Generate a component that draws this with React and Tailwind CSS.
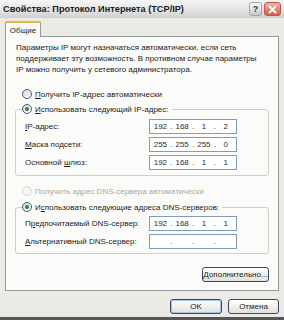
import React from "react";

function Radio({ checked = false, disabled = false }) {
  return (
    <span
      className={
        disabled
          ? "flex h-[10px] w-[10px] shrink-0 items-center justify-center rounded-full border border-[#d8d6cc] bg-[#f6f5f1]"
          : "flex h-[10px] w-[10px] shrink-0 items-center justify-center rounded-full border border-[#3d5f84] bg-gradient-to-br from-[#d8d8d2] to-white"
      }
    >
      {checked && <span className="h-[4px] w-[4px] rounded-full bg-[#3d7a3d]" />}
    </span>
  );
}

function IpField({ parts }) {
  return (
    <div className="flex h-[15px] w-[88px] shrink-0 items-center border border-[#7f9db9] bg-white px-[1px] text-[#2a2a2a]">
      {parts.map((p, i) => (
        <React.Fragment key={i}>
          {i > 0 && <span className="w-[3px] text-center">.</span>}
          <span className="flex-1 text-center">{p}</span>
        </React.Fragment>
      ))}
    </div>
  );
}

function Row({ children, parts }) {
  return (
    <div className="flex items-center">
      <span className="w-[124px] shrink-0">{children}</span>
      <IpField parts={parts} />
    </div>
  );
}

export default function App() {
  return (
    <div className="flex h-[320px] w-[284px] flex-col overflow-hidden bg-[#ebeae4] font-['Liberation_Sans',Arial,sans-serif] text-[8px] leading-[11px] text-[#1c1c1c]">
      {/* Title bar */}
      <div className="flex h-[18px] shrink-0 items-center bg-gradient-to-b from-[#f6f6f6] via-[#e6e6e6] to-[#d0d0d0] pl-[3px] pr-[3px]">
        <span className="flex-1 whitespace-nowrap text-[9.2px] font-bold text-[#202020]">
          Свойства: Протокол Интернета (TCP/IP)
        </span>
        <span className="flex h-[14px] w-[13px] items-center justify-center rounded-[3px] border border-[#a0a4aa] bg-gradient-to-b from-white to-[#c4c8ce] text-[9px] font-bold leading-none text-[#3a3a3a]">
          ?
        </span>
        <span className="ml-[2px] flex h-[14px] w-[17px] items-center justify-center rounded-[3px] border border-[#b8584a] bg-gradient-to-b from-[#f2b2a4] to-[#d65f48]">
          <svg width="9" height="9" viewBox="0 0 9 9">
            <path d="M1.5 1.5 L7.5 7.5 M7.5 1.5 L1.5 7.5" stroke="white" strokeWidth="1.8" strokeLinecap="round" />
          </svg>
        </span>
      </div>

      {/* Body */}
      <div className="flex flex-1 flex-col px-[5px] pt-[3px]">
        <div className="flex">
          <div className="relative z-10 -mb-px flex h-[16px] w-[36px] items-center justify-center rounded-t-[2px] border-x border-t-2 border-[#919b9c] border-t-[#f0b040] bg-[#fbfbf9] text-[#1c1c1c]">
            Общие
          </div>
        </div>

        <div className="flex h-[255px] flex-col border border-[#919b9c] bg-[#fbfbf9] px-[9px] pt-[5px]">
          <p className="pl-[1px] whitespace-nowrap">
            Параметры IP могут назначаться автоматически, если сеть
            <br />
            поддерживает эту возможность. В противном случае параметры
            <br />
            IP можно получить у сетевого администратора.
          </p>

          <div className="ml-[7px] mt-[13px] flex h-[12px] items-center gap-[3px]">
            <Radio />
            <span>
              <u className="underline">П</u>олучить IP-адрес автоматически
            </span>
          </div>

          <fieldset className="mt-[3px] rounded-[3px] border border-[#d0d0bf] pb-[5px]">
            <legend className="ml-[6px] pr-[3px]">
              <span className="flex h-[12px] items-center gap-[3px]">
                <Radio checked />
                <span>
                  <u className="underline">И</u>спользовать следующий IP-адрес:
                </span>
              </span>
            </legend>
            <div className="mt-[4px] flex flex-col gap-[3px] pl-[9px]">
              <Row parts={["192", "168", "1", "2"]}>
                <u className="underline">I</u>P-адрес:
              </Row>
              <Row parts={["255", "255", "255", "0"]}>
                <u className="underline">М</u>аска подсети:
              </Row>
              <Row parts={["192", "168", "1", "1"]}>
                Основной <u className="underline">ш</u>люз:
              </Row>
            </div>
          </fieldset>

          <div className="ml-[7px] mt-[9px] flex h-[12px] items-center gap-[3px] text-[#aca899]">
            <Radio disabled />
            <span>
              Получить адрес DNS-сервера автоматически
            </span>
          </div>

          <fieldset className="mt-[4px] rounded-[3px] border border-[#d0d0bf] pb-[4px]">
            <legend className="ml-[6px] pr-[3px]">
              <span className="flex h-[12px] items-center gap-[3px]">
                <Radio checked />
                <span>
                  И<u className="underline">с</u>пользовать следующие адреса DNS-серверов:
                </span>
              </span>
            </legend>
            <div className="mt-[3px] flex flex-col gap-[3px] pl-[9px]">
              <Row parts={["192", "168", "1", "1"]}>
                П<u className="underline">р</u>едпочитаемый DNS-сервер:
              </Row>
              <Row parts={["", "", "", ""]}>
                <u className="underline">А</u>льтернативный DNS-сервер:
              </Row>
            </div>
          </fieldset>

          <div className="mt-[13px] flex justify-end">
            <div className="flex h-[15px] w-[67px] items-center justify-center rounded-[3px] border border-[#2c4a6e] bg-gradient-to-b from-white to-[#e2e2da]">
              <span>
                <u className="underline">Д</u>ополнительно...
              </span>
            </div>
          </div>
        </div>

        <div className="mt-[8px] flex justify-end gap-[6px]">
          <div className="flex h-[15px] w-[52px] items-center justify-center rounded-[3px] border border-[#2c4a6e] bg-gradient-to-b from-white to-[#e2e2da] shadow-[inset_0_0_0_1px_#a9c0ea]">
            OK
          </div>
          <div className="flex h-[15px] w-[51px] items-center justify-center rounded-[3px] border border-[#2c4a6e] bg-gradient-to-b from-white to-[#e2e2da]">
            Отмена
          </div>
        </div>
      </div>
      <div className="h-[3px] shrink-0 bg-[#555555]" />
    </div>
  );
}
